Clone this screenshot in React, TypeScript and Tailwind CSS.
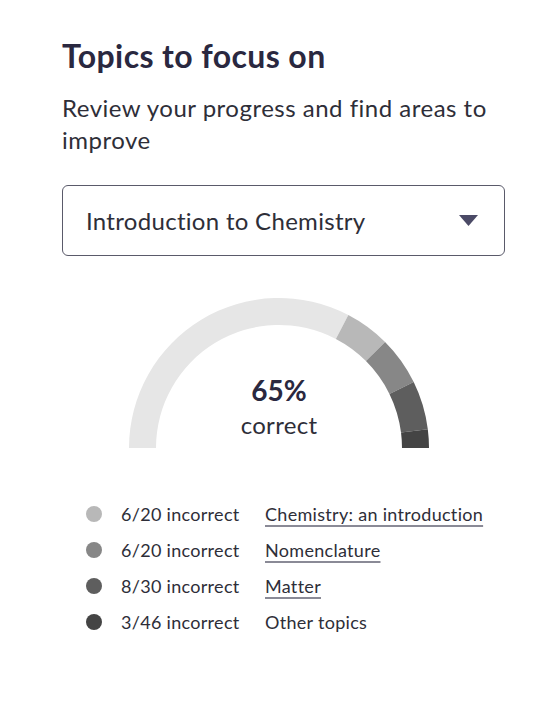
import React from "react";

const CX = 150;
const CY = 150;
const RO = 150;
const RI = 123;

function pt(r: number, f: number) {
  const a = Math.PI * f;
  return [CX - r * Math.cos(a), CY - r * Math.sin(a)];
}

function sector(f0: number, f1: number) {
  const [x0, y0] = pt(RO, f0);
  const [x1, y1] = pt(RO, f1);
  const [x2, y2] = pt(RI, f1);
  const [x3, y3] = pt(RI, f0);
  return `M ${x0} ${y0} A ${RO} ${RO} 0 0 1 ${x1} ${y1} L ${x2} ${y2} A ${RI} ${RI} 0 0 0 ${x3} ${y3} Z`;
}

const segs = [
  { f0: 0, f1: 0.653, c: "#e6e6e6" },
  { f0: 0.653, f1: 0.75, c: "#b8b8b8" },
  { f0: 0.75, f1: 0.855, c: "#878787" },
  { f0: 0.855, f1: 0.96, c: "#5e5e5e" },
  { f0: 0.96, f1: 1, c: "#444444" },
];

const rows = [
  { dot: "bg-[#b8b8b8]", count: "6/20 incorrect", label: "Chemistry: an introduction", link: true },
  { dot: "bg-[#878787]", count: "6/20 incorrect", label: "Nomenclature", link: true },
  { dot: "bg-[#5e5e5e]", count: "8/30 incorrect", label: "Matter", link: true },
  { dot: "bg-[#444444]", count: "3/46 incorrect", label: "Other topics", link: false },
];

export default function App() {
  return (
    <div className="w-[560px] h-[701px] bg-white font-['Lato',sans-serif] text-[#2a2840]">
      <div className="pl-[62px] pr-[55px] pt-[37px]">
        <h1 className="text-[32px] leading-[38px] font-bold tracking-[0.4px] text-[#2a2840]">Topics to focus on</h1>
        <p className="mt-[17px] text-[24px] leading-[32px] tracking-[0.5px] text-[#2e2e38]">
          Review your progress and find areas to improve
        </p>
        <div className="mt-[29px] h-[71px] rounded-[6px] border-[1.5px] border-[#5a5a6a] flex items-center justify-between pl-[23px] pr-[26px]">
          <span className="text-[24px] tracking-[0.3px] text-[#2e2e38]">Introduction to Chemistry</span>
          <svg width="19" height="11" viewBox="0 0 19 11">
            <path d="M0 0 H19 L9.5 11 Z" fill="#4b4a66" />
          </svg>
        </div>
        <div className="mt-[42px] ml-[67px] relative w-[300px] h-[150px]">
          <svg width="300" height="150" viewBox="0 0 300 150" className="block">
            {segs.map((s, i) => (
              <path key={i} d={sector(s.f0, s.f1)} fill={s.c} />
            ))}
          </svg>
          <div className="absolute left-0 right-0 top-[75px] flex flex-col items-center">
            <span className="text-[28px] leading-[34px] font-bold text-[#2a2840]">65%</span>
            <span className="mt-[3px] text-[24px] leading-[30px] tracking-[0.3px] text-[#2e2e38]">correct</span>
          </div>
        </div>
        <div className="mt-[54px] flex flex-col gap-[12px] pl-[24px]">
          {rows.map((r, i) => (
            <div key={i} className="flex items-center h-[24px] text-[18px] tracking-[0.3px] text-[#2e2e38]">
              <span className={`w-[16px] h-[16px] rounded-full ${r.dot}`} />
              <span className="ml-[19px] w-[144px]">{r.count}</span>
              {r.link ? (
                <span className="underline decoration-[#8a8a96] decoration-[1.5px] underline-offset-[4px]">{r.label}</span>
              ) : (
                <span>{r.label}</span>
              )}
            </div>
          ))}
        </div>
      </div>
    </div>
  );
}
